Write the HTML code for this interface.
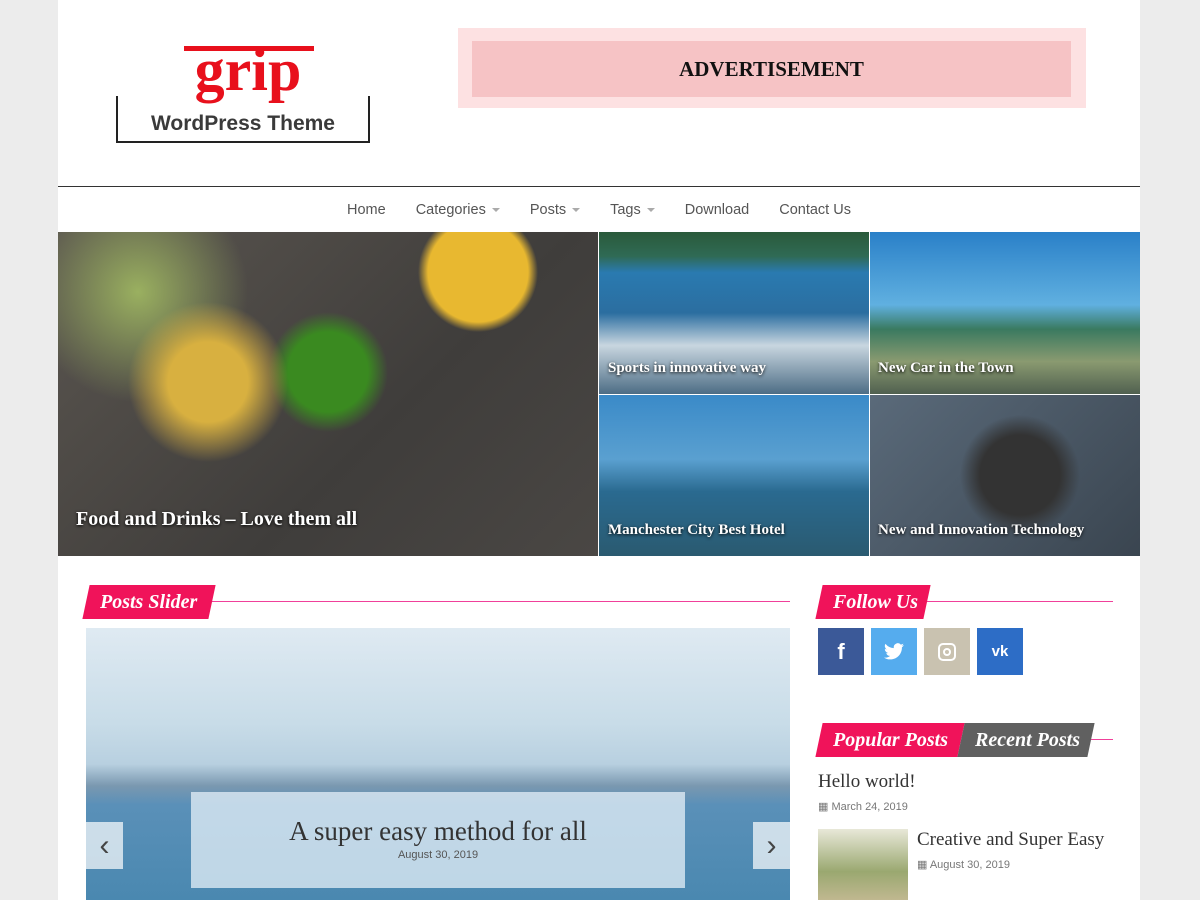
<!DOCTYPE html>
<html><head><meta charset="utf-8"><style>
*{margin:0;padding:0;box-sizing:border-box}
body{width:1200px;height:900px;overflow:hidden;background:#ececec;font-family:"Liberation Sans",sans-serif;position:relative}
.page{position:absolute;left:58px;top:0;width:1082px;height:900px;background:#fff}
.abs{position:absolute}
.nav{position:absolute;top:186px;left:0;width:1082px;height:46px;border-top:1px solid #333;display:flex;justify-content:center;align-items:center;gap:30px;font-size:14.5px;color:#555}
.nav span .c{display:inline-block;width:0;height:0;border-left:4px solid transparent;border-right:4px solid transparent;border-top:4px solid #aaa;margin-left:6px;vertical-align:middle}
.tile{position:absolute;overflow:hidden}
.tile b{position:absolute;color:#fff;font-family:"Liberation Serif",serif;font-weight:bold;text-shadow:0 1px 3px #000}
.tag{position:absolute;height:34px;color:#fff;font-family:"Liberation Serif",serif;font-style:italic;font-weight:bold;font-size:20px;line-height:34px;padding-left:14px;transform:skewX(-12deg)}
.tag span{display:inline-block;transform:skewX(12deg)}
.line{position:absolute;height:1px;background:#f0409a}
.soc{position:absolute;top:628px;width:46px;height:47px;display:flex;align-items:center;justify-content:center;color:#fff;font-weight:bold;font-size:22px}
</style></head><body>
<div class="page">
 <div class="abs" style="left:120px;top:40px;width:140px;text-align:center;color:#e8101c;font-family:'Liberation Serif',serif;font-size:60px;line-height:60px;font-weight:bold">grip</div>
 <div class="abs" style="left:126px;top:46px;width:130px;height:5px;background:#e8101c"></div>
 <div class="abs" style="left:58px;top:96px;width:254px;height:47px;border:2px solid #222;border-top:none"></div>
 <div class="abs" style="left:58px;top:112px;width:254px;text-align:center;font-size:21px;font-weight:bold;color:#3a3a3a">WordPress Theme</div>
 <div class="abs" style="left:400px;top:28px;width:628px;height:80px;background:#fde1e2"></div>
 <div class="abs" style="left:414px;top:41px;width:599px;height:56px;background:#f6c3c5;text-align:center;line-height:56px;font-family:'Liberation Serif',serif;font-weight:bold;font-size:21px;color:#111">ADVERTISEMENT</div>
 <div class="nav"><span>Home</span><span>Categories<i class="c"></i></span><span>Posts<i class="c"></i></span><span>Tags<i class="c"></i></span><span>Download</span><span>Contact Us</span></div>
 <div class="tile" style="left:0;top:232px;width:540px;height:324px;background:radial-gradient(circle at 420px 40px,#e8b830 0 50px,transparent 60px),radial-gradient(circle at 150px 150px,#d8b040 0 40px,transparent 80px),radial-gradient(circle at 270px 140px,#3a8a20 0 40px,transparent 60px),radial-gradient(circle at 80px 60px,#9ab060,transparent 110px),linear-gradient(135deg,#5b5650,#3f3d3b 60%,#4a4744)"><b style="left:18px;top:276px;font-size:20px">Food and Drinks – Love them all</b></div>
 <div class="tile" style="left:541px;top:232px;width:270px;height:162px;background:linear-gradient(180deg,#2a5a3a 0,#2f6a55 15%,#2a7ab0 25%,#2b6ea0 50%,#c8d6e0 70%,#4d6d85 100%)"><b style="left:9px;top:128px;font-size:15px">Sports in innovative way</b></div>
 <div class="tile" style="left:812px;top:232px;width:270px;height:162px;background:linear-gradient(180deg,#2a80c8 0,#60b0e0 45%,#3a7a60 60%,#8a9a70 80%,#506050 100%)"><b style="left:8px;top:128px;font-size:15px">New Car in the Town</b></div>
 <div class="tile" style="left:541px;top:395px;width:270px;height:161px;background:linear-gradient(180deg,#3a8ac8 0,#5aa0d0 40%,#2a6a90 60%,#2a5a70 100%)"><b style="left:9px;top:127px;font-size:15px">Manchester City Best Hotel</b></div>
 <div class="tile" style="left:812px;top:395px;width:270px;height:161px;background:radial-gradient(circle at 150px 80px,#333 0 40px,transparent 60px),linear-gradient(135deg,#5a6a7a,#3a4550)"><b style="left:8px;top:127px;font-size:15px">New and Innovation Technology</b></div>

 <div class="line" style="left:150px;top:601px;width:582px"></div>
 <div class="tag" style="left:28px;top:585px;width:126px;background:#f0135a"><span>Posts Slider</span></div>
 <div class="abs" style="left:28px;top:628px;width:704px;height:272px;background:linear-gradient(180deg,#dfeaf2 0,#c8dce8 35%,#b8d0e0 50%,#7a98b0 58%,#5a90b8 65%,#4a88b0 100%)"></div>
 <div class="abs" style="left:133px;top:792px;width:494px;height:96px;background:rgba(230,240,248,.75);text-align:center">
  <div style="font-family:'Liberation Serif',serif;font-size:27px;color:#333;margin-top:24px">A super easy method for all</div>
  <div style="font-size:11px;color:#555;margin-top:2px">August 30, 2019</div></div>
 <div class="abs" style="left:28px;top:822px;width:37px;height:47px;background:rgba(255,255,255,.7);color:#444;font-size:30px;text-align:center;line-height:47px">‹</div>
 <div class="abs" style="left:695px;top:822px;width:37px;height:47px;background:rgba(255,255,255,.7);color:#444;font-size:30px;text-align:center;line-height:47px">›</div>

 <div class="line" style="left:866px;top:601px;width:189px"></div>
 <div class="tag" style="left:761px;top:585px;width:108px;background:#f0135a"><span>Follow Us</span></div>
 <div class="soc" style="left:760px;background:#3b5998">f</div>
 <div class="soc" style="left:813px;background:#55acee"><svg width="20" height="17" viewBox="0 0 24 20"><path fill="#fff" d="M24 2.4a10 10 0 0 1-2.8.8A5 5 0 0 0 23.3.5a10 10 0 0 1-3.1 1.2A4.9 4.9 0 0 0 11.8 6 14 14 0 0 1 1.7.9a4.9 4.9 0 0 0 1.5 6.6A4.9 4.9 0 0 1 1 6.9a4.9 4.9 0 0 0 3.9 4.9 5 5 0 0 1-2.2.1 4.9 4.9 0 0 0 4.6 3.4A9.9 9.9 0 0 1 0 17.3 14 14 0 0 0 7.5 19.5c9.1 0 14-7.5 14-14v-.6A10 10 0 0 0 24 2.4z"/></svg></div>
 <div class="soc" style="left:866px;background:#c9c2b0"><div style="width:18px;height:18px;border:2px solid #fff;border-radius:5px;display:flex;align-items:center;justify-content:center"><div style="width:8px;height:8px;border:2px solid #fff;border-radius:50%"></div></div></div>
 <div class="soc" style="left:919px;background:#2d6dc6;font-size:15px">vk</div>
 <div class="line" style="left:1030px;top:739px;width:25px"></div>
 <div class="tag" style="left:761px;top:723px;width:142px;background:#f0135a"><span>Popular Posts</span></div>
 <div class="tag" style="left:903px;top:723px;width:130px;background:#606060"><span>Recent Posts</span></div>
 <div class="abs" style="left:760px;top:771px;font-family:'Liberation Serif',serif;font-size:19px;color:#333">Hello world!</div>
 <div class="abs" style="left:760px;top:800px;font-size:11px;color:#777">▦ March 24, 2019</div>
 <div class="abs" style="left:760px;top:829px;width:90px;height:71px;background:linear-gradient(180deg,#e8e8d8,#9aa870 60%,#c0b890)"></div>
 <div class="abs" style="left:859px;top:829px;font-family:'Liberation Serif',serif;font-size:19px;color:#333">Creative and Super Easy</div>
 <div class="abs" style="left:859px;top:858px;font-size:11px;color:#777">▦ August 30, 2019</div>
</div>
</body></html>
